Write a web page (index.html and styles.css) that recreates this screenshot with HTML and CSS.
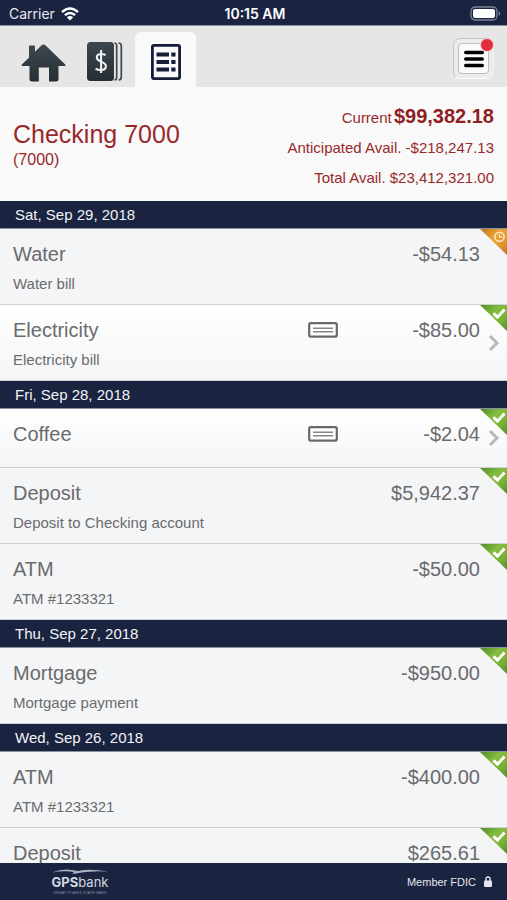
FILE: index.html
```html
<!DOCTYPE html>
<html lang="en">
<head>
<meta charset="utf-8">
<meta name="viewport" content="width=device-width, initial-scale=1">
<title>Checking 7000</title>
<link rel="stylesheet" href="styles.css">
</head>
<body>
<svg class="defs" aria-hidden="true">
  <defs>
    <linearGradient id="slate" x1="0" y1="0" x2="0" y2="1">
      <stop offset="0" stop-color="#3e474d"/><stop offset="1" stop-color="#252f36"/>
    </linearGradient>
    <linearGradient id="green" x1="0" y1="0" x2="1" y2="1">
      <stop offset="0" stop-color="#4f8c28"/><stop offset=".4" stop-color="#85be3e"/><stop offset=".7" stop-color="#78b236"/><stop offset="1" stop-color="#4f8c28"/>
    </linearGradient>
    <linearGradient id="orange" x1="0" y1="0" x2="1" y2="1">
      <stop offset="0" stop-color="#b8741f"/><stop offset=".4" stop-color="#eda236"/><stop offset=".7" stop-color="#e0952f"/><stop offset="1" stop-color="#b8741f"/>
    </linearGradient>
    <symbol id="cleared" viewBox="0 0 27 26">
      <path d="M0 0H27V26Z" fill="url(#green)"/>
      <path d="M13.5 8.4l4 3.8L24.5 4.5" fill="none" stroke="#fff" stroke-width="3"/>
    </symbol>
    <symbol id="pending" viewBox="0 0 27 26">
      <path d="M0 0H27V26Z" fill="url(#orange)"/>
      <circle cx="19.5" cy="7.8" r="4.6" fill="none" stroke="#fdeccb" stroke-width="1.5"/>
      <path d="M19.5 5v3.2h2.8" fill="none" stroke="#fdeccb" stroke-width="1.2"/>
    </symbol>
    <symbol id="check" viewBox="0 0 30 16">
      <rect x="1.2" y="1.2" width="27.6" height="13.4" rx="1.5" fill="#fff" stroke="#68696b" stroke-width="2.2"/>
      <path d="M5 6.2h20M5 9.8h20" stroke="#85868a" stroke-width="1.5"/>
    </symbol>
    <symbol id="chevron" viewBox="0 0 12 18">
      <path d="M2 2l7 7-7 7" fill="none" stroke="#b7b8ba" stroke-width="3"/>
    </symbol>
  </defs>
</svg>
<div class="app">
  <div class="status">
    <div class="carrier"><span>Carrier</span>
      <svg width="18" height="14" viewBox="0 0 18 14" fill="none" stroke="#fff" stroke-width="2.4"><path d="M1 5.1Q9-2.2 17 5.1M3.9 8.2q5.1-4.5 10.2 0"/><path d="M9 13.6L5.8 10.3q3.2-2.6 6.4 0z" fill="#fff" stroke="none"/></svg>
    </div>
    <div class="time">10:15 AM</div>
    <svg class="battery" width="31" height="16" viewBox="0 0 31 16"><rect x="1" y="1" width="26" height="13" rx="4" fill="none" stroke="#7b8295" stroke-width="1.3"/><rect x="3" y="3" width="22" height="9" rx="2" fill="#fff"/><path d="M28.7 5q3 2.5 0 5z" fill="#7b8295"/></svg>
  </div>
  <header class="toolbar">
    <nav class="tabs">
      <a class="tab" href="#home" aria-label="Home"><svg width="46" height="40" viewBox="0 0 46 40"><path d="M.8 22.5L8 15.7V4.5Q8 3.5 9 3.5h4q1 0 1 1v5.2L20.3 3.6Q22.5 1.5 24.7 3.6L44.2 22.5Q45.2 24 43.5 24H37.5V37Q37.5 39.5 35 39.5H28V25.5H17.8V39.5H11Q8.5 39.5 8.5 37V24H1.5Q0 24 .8 22.5Z" fill="url(#slate)"/></svg></a>
      <a class="tab" href="#accounts" aria-label="Accounts"><svg width="36" height="39" viewBox="0 0 36 39"><rect width="27" height="39" rx="3.5" fill="url(#slate)"/><path d="M27.5 1q2.2 0 2.2 3v31q0 3-2.2 3M31.5 1q2.8 0 2.8 3v31q0 3-2.8 3" fill="none" stroke="#40484d" stroke-width="1.7"/><path d="M18.6 13.2Q16.8 12 14.3 12C11 12 9.8 13.8 9.8 15.6C9.8 17.8 11.5 18.6 14 19.6C17 20.8 18.9 22 18.9 24.2C18.9 26.6 17 28 13.8 28Q10.6 28 8.6 26.6M14.1 8v23" fill="none" stroke="#f1f1f1" stroke-width="2.1"/></svg></a>
      <a class="tab active" href="#history" aria-label="Transactions" aria-current="page"><svg width="30" height="36" viewBox="0 0 30 36"><rect x="1.4" y="1.4" width="27.2" height="33.2" rx="1.5" fill="none" stroke="#151d38" stroke-width="2.8"/><path d="M5.5 10.5h12.5m2.3 0h4.2M5.5 18h12.5m2.3 0h4.2M5.5 25.5h12.5m2.3 0h4.2" stroke="#151d38" stroke-width="4"/></svg></a>
    </nav>
    <button class="menu" type="button" aria-label="Menu"><span class="menu-face"><svg width="20" height="18" viewBox="0 0 20 18"><path d="M1.7 2.5h16.6M1.7 9h16.6M1.7 15.5h16.6" stroke="#000" stroke-width="3.4" stroke-linecap="round"/></svg></span><span class="badge"></span></button>
  </header>
  <section class="account">
    <div><h1>Checking 7000</h1><p class="number">(7000)</p></div>
    <div class="balances">
      <p class="current">Current <strong>$99,382.18</strong></p>
      <p>Anticipated Avail. -$218,247.13</p>
      <p>Total Avail. $23,412,321.00</p>
    </div>
  </section>
  <main class="list">
    <h2>Sat, Sep 29, 2018</h2>
    <div class="row"><h3>Water</h3><span class="amount">-$54.13</span><p>Water bill</p><svg class="corner"><use href="#pending"/></svg></div>
    <a class="row link" href="#electricity"><h3>Electricity</h3><svg class="check"><use href="#check"/></svg><span class="amount">-$85.00</span><p>Electricity bill</p><svg class="chevron"><use href="#chevron"/></svg><svg class="corner"><use href="#cleared"/></svg></a>
    <h2>Fri, Sep 28, 2018</h2>
    <a class="row link short" href="#coffee"><h3>Coffee</h3><svg class="check"><use href="#check"/></svg><span class="amount">-$2.04</span><svg class="chevron"><use href="#chevron"/></svg><svg class="corner"><use href="#cleared"/></svg></a>
    <div class="row"><h3>Deposit</h3><span class="amount">$5,942.37</span><p>Deposit to Checking account</p><svg class="corner"><use href="#cleared"/></svg></div>
    <div class="row"><h3>ATM</h3><span class="amount">-$50.00</span><p>ATM #1233321</p><svg class="corner"><use href="#cleared"/></svg></div>
    <h2>Thu, Sep 27, 2018</h2>
    <div class="row"><h3>Mortgage</h3><span class="amount">-$950.00</span><p>Mortgage payment</p><svg class="corner"><use href="#cleared"/></svg></div>
    <h2>Wed, Sep 26, 2018</h2>
    <div class="row"><h3>ATM</h3><span class="amount">-$400.00</span><p>ATM #1233321</p><svg class="corner"><use href="#cleared"/></svg></div>
    <div class="row short"><h3>Deposit</h3><span class="amount">$265.61</span><svg class="corner"><use href="#cleared"/></svg></div>
  </main>
  <footer class="footer">
    <div class="logo">
      <svg width="56" height="5" viewBox="0 0 56 5"><path d="M0 3.5Q10-.5 20 1L26 2Q38-.6 56 2.5 38 1.4 20 5L22 3Q12 1.2 0 3.5Z" fill="#a9b0bf"/></svg>
      <span class="brand"><b>GPS</b>bank</span>
      <span class="tagline">GREAT PLAINS STATE BANK</span>
    </div>
    <div class="member"><span>Member FDIC</span><svg width="8" height="11" viewBox="0 0 8 11"><path d="M2 5V3Q2 1 4 1t2 2v2" fill="none" stroke="#e4e6eb" stroke-width="1.4"/><rect y="4.5" width="8" height="6.5" rx="1" fill="#e4e6eb"/></svg></div>
  </footer>
</div>
</body>
</html>
```
FILE: styles.css
```css
* { box-sizing: border-box; }
body, h1, h2, h3, p { margin: 0; font-weight: normal; }
body { font-family: "Liberation Sans", Arial, sans-serif; font-size: 15px; color: #6a6b6d; background: #f4f5f7; }
a { color: inherit; text-decoration: none; }
svg { display: block; flex: none; }
.defs { position: absolute; width: 0; height: 0; }

.app { height: 100vh; display: flex; flex-direction: column; overflow: hidden; }
.app > * { flex: none; }

.status { display: grid; grid-template-columns: 1fr auto 1fr; align-items: center; height: 26px; padding: 2px 6px 0 9px; background: #1a2440; border-bottom: 1px solid #8b909e; color: #fff; font: 14px/20px Inter, sans-serif; }
.carrier { display: flex; align-items: center; gap: 6px; color: #e6e8ee; }
.time { font-weight: 600; }
.battery { justify-self: end; }

.toolbar { display: flex; justify-content: space-between; background: #e6e6e6; height: 61px; padding: 6px 13px 0; }
.tabs { display: flex; }
.tab { width: 61px; display: flex; align-items: center; justify-content: center; padding-top: 4px; border-radius: 6px 6px 0 0; }
.tab.active { background: #f9f9f9; }
.menu { position: relative; width: 41px; height: 41px; margin-top: 6px; padding: 4px; border: 1px solid; border-color: #c4c4c4 #f2f2f2 #fafafa #c9c9c9; border-radius: 7px; background: #ececec; }
.menu-face { display: flex; align-items: center; justify-content: center; height: 100%; background: #fafafa; border: 1px solid #bdbdbd; border-radius: 4px; }
.badge { position: absolute; top: -1px; right: -1px; width: 14px; height: 14px; border: 1px solid #f6d5d8; border-radius: 50%; background: #e22f3e; }

.account { display: flex; justify-content: space-between; height: 114px; padding: 14px 13px 0; background: #f9f9f9; color: #97292b; }
h1 { font-size: 25px; line-height: 28px; padding-top: 19px; }
.number { font-size: 16px; line-height: 24px; }
.balances { text-align: right; line-height: 30px; }
.balances strong { font-size: 20px; color: #8c2023; margin-left: -2px; }

.list { flex: 1; min-height: 0; overflow: hidden; }
h2 { height: 28px; padding-left: 15px; font-size: 15px; line-height: 28px; color: #f1f3f7; background: #1a2440; border-bottom: 1px solid #8b909e; }
.row { position: relative; display: grid; grid-template-columns: 1fr 30px 142px 27px; grid-template-rows: 24px 18px; row-gap: 9px; align-items: center; height: 76px; padding: 13px 0 0 13px; border-bottom: 1px solid #d0d2d4; background: #f4f5f7; }
.row.short { grid-template-rows: 24px; height: 59px; }
.row.link { background: linear-gradient(#fff, #f4f5f7); }
h3, .amount { font-size: 20px; line-height: 24px; }
.amount { grid-area: 1 / 3; text-align: right; }
.row p { grid-area: 2 / 1; line-height: 18px; }
.check { grid-area: 1 / 2; width: 30px; height: 16px; }
.chevron { position: absolute; right: 7px; top: 50%; margin-top: -9px; width: 12px; height: 18px; }
.corner { position: absolute; top: 0; right: 0; width: 27px; height: 26px; }

.footer { display: flex; justify-content: space-between; align-items: center; height: 37px; padding: 0 15px 0 52px; background: #1a2440; color: #e4e6eb; }
.logo { display: flex; flex-direction: column; align-items: center; width: 56px; }
.brand { font: 13px/16px Inter, sans-serif; color: #d5d8e0; }
.tagline { font-size: 4px; line-height: 5px; color: #7f879b; white-space: nowrap; }
.member { display: flex; align-items: center; gap: 8px; font-size: 11px; }
```
